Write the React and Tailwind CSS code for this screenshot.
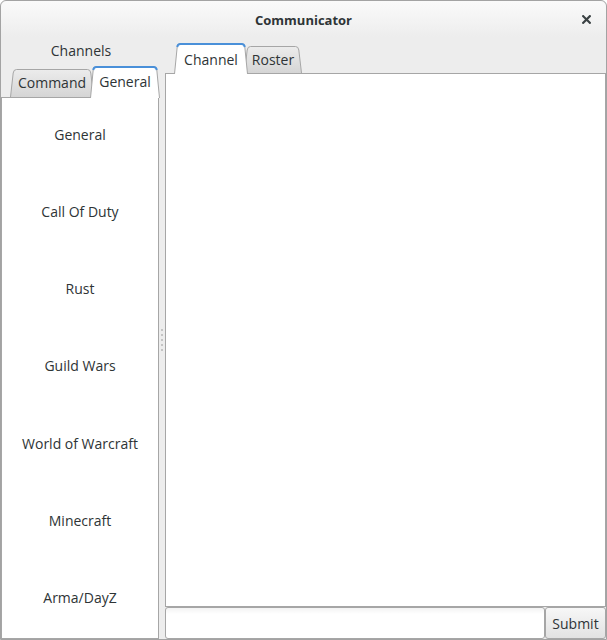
import React from "react";

function Tab({ w, h, label, active, shift = 1 }) {
  const path = `M0.5,${h} L3.2,4 Q3.6,0.5 6.5,0.5 L${w - 6.5},0.5 Q${w - 3.6},0.5 ${w - 3.2},4 L${w - 0.5},${h}`;
  const gid = `g-${label}`;
  return (
    <div
      className={`relative shrink-0 flex items-center justify-center ${active ? "z-10 -mb-px" : ""}`}
      style={{ width: w, height: h }}
    >
      <svg className="absolute inset-0" width={w} height={h} viewBox={`0 0 ${w} ${h}`}>
        <defs>
          <linearGradient id={gid} x1="0" y1="0" x2="0" y2="1">
            <stop offset="0" stopColor={active ? "#ffffff" : "#ececec"} />
            <stop offset="1" stopColor={active ? "#ffffff" : "#d5d5d5"} />
          </linearGradient>
        </defs>
        <path d={path + " Z"} fill={`url(#${gid})`} stroke="none" />
        <path d={path} fill="none" stroke="#a6a6a6" strokeWidth="1" />
        {active && (
          <path
            d={`M3.2,4 Q3.6,1 6.5,1 L${w - 6.5},1 Q${w - 3.6},1 ${w - 3.2},4`}
            fill="none"
            stroke="#4a90d9"
            strokeWidth="2"
          />
        )}
      </svg>
      <span className="relative text-[14px] text-[#2e3436]" style={{ marginTop: shift }}>
        {label}
      </span>
    </div>
  );
}

const channels = [
  "General",
  "Call Of Duty",
  "Rust",
  "Guild Wars",
  "World of Warcraft",
  "Minecraft",
  "Arma/DayZ",
];

export default function App() {
  return (
    <div
      className="w-[607px] h-[640px] bg-[#ededed] border border-[#a3a3a3] rounded-t-[6px] flex flex-col overflow-hidden text-[#2e3436]"
      style={{ fontFamily: '"Open Sans", "DejaVu Sans", sans-serif' }}
    >
      <div className="h-[36px] shrink-0 relative flex items-center justify-center bg-gradient-to-b from-[#fafafa] to-[#ededed] rounded-t-[6px]">
        <span className="text-[13px] font-bold text-[#2e3436] mt-[4px]">Communicator</span>
        <svg className="absolute right-[15px] top-[14px]" width="9" height="9" viewBox="0 0 9 9">
          <path d="M1.2,1.2 L7.8,7.8 M7.8,1.2 L1.2,7.8" stroke="#3b4244" strokeWidth="2.2" strokeLinecap="square" />
        </svg>
      </div>
      <div className="flex-1 flex min-h-0">
        <div className="w-[158px] shrink-0 flex flex-col">
          <div className="h-[28px] flex items-center justify-center text-[14px] pl-[2px] pb-[2px]">Channels</div>
          <div className="h-[32px] flex items-end pl-[9px]">
            <Tab w={84} h={28} label="Command" shift={-2} />
            <div className="-ml-[4px] flex items-end">
              <Tab w={70} h={32} label="General" active shift={-1} />
            </div>
          </div>
          <div className="flex-1 bg-white border border-[#a6a6a6] flex flex-col">
            {channels.map((c) => (
              <div key={c} className="flex-1 flex items-center justify-center text-[14px] pb-[4px]">
                {c}
              </div>
            ))}
          </div>
        </div>
        <div className="w-[6px] shrink-0 flex flex-col items-center justify-center gap-[3px] pt-[4px]">
          {[0, 1, 2, 3, 4].map((i) => (
            <div key={i} className="w-[2px] h-[2px] bg-[#c4c4c4]" />
          ))}
        </div>
        <div className="flex-1 flex flex-col min-w-0">
          <div className="h-[36px] flex items-end pl-[9px]">
            <Tab w={74} h={31} label="Channel" active shift={1} />
            <div className="-ml-[4px] flex items-end">
              <Tab w={58} h={27} label="Roster" shift={0} />
            </div>
          </div>
          <div className="flex-1 bg-white border border-[#a6a6a6]" />
          <div className="h-[32px] flex">
            <div className="flex-1 border border-[#a6a6a6] rounded-[3px] bg-gradient-to-b from-[#f3f3f3] to-white to-[20%]" />
            <button className="w-[61px] border border-[#a6a6a6] rounded-[3px] bg-gradient-to-b from-[#f7f7f7] to-[#e2e2e2] text-[14px] text-[#2e3436]">
              Submit
            </button>
          </div>
        </div>
      </div>
    </div>
  );
}
